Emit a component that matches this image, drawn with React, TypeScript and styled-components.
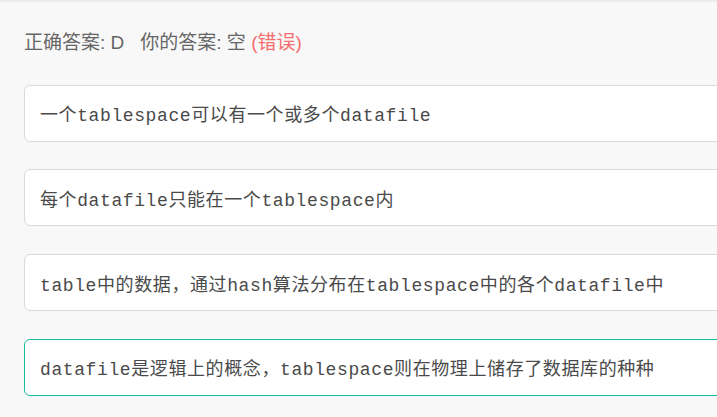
import React from "react";
import styled, { createGlobalStyle } from "styled-components";

const GlobalStyle = createGlobalStyle`
  html, body {
    margin: 0;
    padding: 0;
    overflow: hidden;
    background: #f8f8f8;
  }
`;

const Page = styled.div`
  width: 780px;
  min-height: 417px;
  box-sizing: border-box;
  border-top: 2px solid #ebebeb;
  padding: 0 0 0 24px;
  background: #f8f8f8;
`;

const Header = styled.div`
  padding-top: 27px;
  line-height: 28px;
  font-family: "Liberation Sans", "Noto Sans CJK SC", sans-serif;
  font-size: 19px;
  color: #666;
  white-space: nowrap;
`;

const Answer = styled.span`
  margin-right: 16px;
`;

const Wrong = styled.span`
  color: #f56c6c;
`;

const Options = styled.div`
  display: flex;
  flex-direction: column;
  gap: 27.7px;
  margin-top: 27.7px;
`;

const Option = styled.div<{ $selected?: boolean }>`
  height: 57px;
  box-sizing: border-box;
  display: flex;
  align-items: center;
  padding: 0 15px;
  background: #fff;
  border: 1px solid ${(p) => (p.$selected ? "#1abc9c" : "#dadada")};
  border-radius: 6px;
  font-family: "Liberation Mono", "Noto Sans CJK SC", monospace;
  font-size: 18px;
  letter-spacing: 0.6px;
  color: #4a4a4a;
  white-space: nowrap;
`;

const options = [
  "一个tablespace可以有一个或多个datafile",
  "每个datafile只能在一个tablespace内",
  "table中的数据，通过hash算法分布在tablespace中的各个datafile中",
  "datafile是逻辑上的概念，tablespace则在物理上储存了数据库的种种",
];

export default function App() {
  return (
    <>
      <GlobalStyle />
      <Page>
        <Header>
          <Answer>正确答案: D</Answer>
          你的答案: 空 <Wrong>(错误)</Wrong>
        </Header>
        <Options>
          {options.map((text, i) => (
            <Option key={i} $selected={i === 3}>
              {text}
            </Option>
          ))}
        </Options>
      </Page>
    </>
  );
}
